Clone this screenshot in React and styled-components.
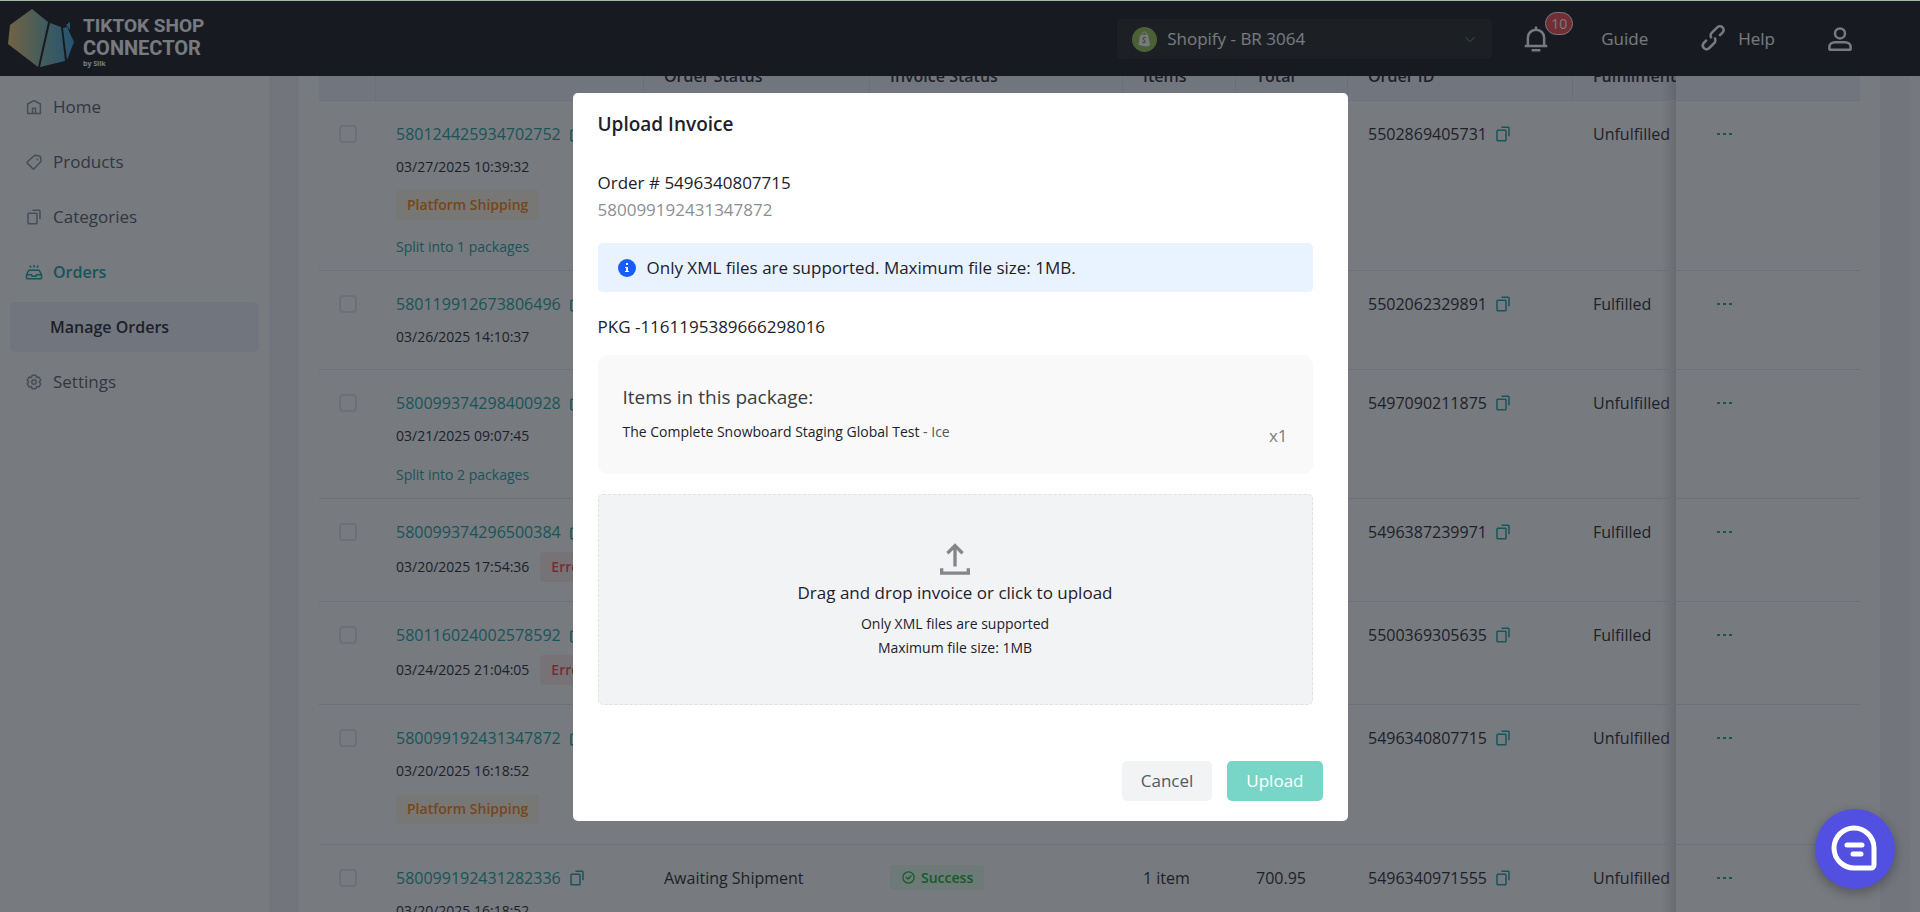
import React from "react";
import styled, { createGlobalStyle } from "styled-components";

const GlobalStyle = createGlobalStyle`
  :root {
    --root-font: "Open Sans", "Noto Sans", sans-serif;
    --text: #1d2129;
    --text-2: #4e5969;
    --teal: #0fa29e;
    --line: #e5e6eb;
  }
  * {
    box-sizing: border-box;
  }
  body {
    margin: 0;
    font: normal 400 17px/26px var(--root-font);
    color: var(--text);
    background: #f2f3f5;
  }
  button, select, input {
    font: inherit;
    color: inherit;
  }
  a {
    color: inherit;
    text-decoration: none;
  }
`;

const Page = styled.div`
  height: 100vh;
  display: flex;
  flex-direction: column;
  overflow: hidden;
`;

const TopLine = styled.div`
  position: fixed;
  top: 0;
  left: 0;
  right: 0;
  height: 1px;
  background: #a3bba3;
  z-index: 20;
`;

const Header = styled.header`
  flex: none;
  height: 76px;
  background: #111214;
  color: #ffffff;
  display: flex;
  align-items: center;
  justify-content: space-between;
  padding: 2px 65px 0 8px;
`;

const Brand = styled.a`
  display: flex;
  align-items: center;
  gap: 8px;
`;

const BrandText = styled.div`
  display: flex;
  flex-direction: column;
  padding-top: 5px;
  font: normal 700 19px/22px Roboto, "Open Sans", sans-serif;
`;

const BrandName = styled.span`
  font-size: 20px;
`;

const BrandBy = styled.span`
  font: normal 700 7px/10px var(--root-font);
`;

const HeaderNav = styled.nav`
  display: flex;
  align-items: center;
`;

const StoreSelect = styled.label`
  display: flex;
  align-items: center;
  gap: 10px;
  width: 375px;
  height: 40px;
  padding: 0 15px;
  border-radius: 5px;
  background: #1d1e20;
  color: #ffffff;
`;

const SelectArrow = styled.span`
  display: flex;
  color: #5c6675;
`;

const StoreInput = styled.select`
  flex: 1;
  appearance: none;
  border: none;
  padding: 0;
  background: transparent;
`;

const BellButton = styled.button`
  position: relative;
  display: flex;
  margin: 0 0 0 29px;
  padding: 0;
  border: none;
  background: transparent;
`;

const BellCount = styled.span`
  position: absolute;
  top: -12px;
  left: 24px;
  height: 23px;
  padding: 0 5px;
  border: 1px solid #ffffff;
  border-radius: 12px;
  background: #f53f46;
  font: normal 400 14px/21px var(--root-font);
`;

const HeaderLink = styled.a`
  display: flex;
  align-items: center;
  gap: 10px;
  margin-left: 50px;
`;

const Body = styled.div`
  flex: 1;
  min-height: 0;
  display: flex;
`;

const Sidebar = styled.aside`
  flex: none;
  width: 269px;
  padding: 6px 10px;
  background: #ffffff;
  display: flex;
  flex-direction: column;
  gap: 5px;
`;

const MenuItem = styled.a`
  display: flex;
  align-items: center;
  gap: 10px;
  height: 50px;
  padding-left: ${(props) => (props.$sub ? 40 : 15)}px;
  border-radius: 5px;
  background: ${(props) => (props.$selected ? "#f1f2fb" : "transparent")};
  color: ${(props) =>
    props.$active ? "var(--teal)" : props.$selected ? "var(--text)" : "var(--text-2)"};
  font-size: ${(props) => (props.$active || props.$selected ? 16 : 17)}px;
  font-weight: ${(props) => (props.$active || props.$selected ? 600 : 400)};

  svg {
    color: ${(props) => (props.$active ? "var(--teal)" : "#86909c")};
  }
`;

const Main = styled.main`
  flex: 1;
  min-width: 0;
  padding: 0 30px;
  overflow: hidden;
`;

const Panel = styled.div`
  height: 100%;
  padding: 0 20px;
  background: #ffffff;
  overflow: hidden;
`;

const ScrollTrack = styled.div`
  flex: none;
  width: 10px;
  background: #fafafa;
`;

const TableScroll = styled.div`
  margin-top: -24px;
  overflow: hidden;
`;

const Table = styled.table`
  width: 110%;
  min-width: 1640px;
  table-layout: fixed;
  border-collapse: separate;
  border-spacing: 0;
  font-size: 16px;
`;

const Th = styled.th`
  padding: 11px 20px;
  background: #f1f2fb;
  border-bottom: 1px solid var(--line);
  border-right: 1px solid #e6e7ef;
  font-weight: 600;
  text-align: left;
  white-space: nowrap;
`;

const Td = styled.td`
  padding: 20px 20px ${(props) => (props.$tight ? 11 : 20)}px;
  border-bottom: 1px solid var(--line);
  background: #ffffff;
  vertical-align: top;
  white-space: nowrap;
`;

// last column stays pinned to the right edge
const pinned = `
  position: sticky;
  right: 0;
  z-index: 1;

  &::before {
    content: "";
    position: absolute;
    top: 0;
    bottom: 0;
    left: -14px;
    width: 14px;
    background: linear-gradient(to right, transparent, rgba(0, 0, 0, 0.14));
  }
`;

const PinnedTh = styled(Th)`
  ${pinned}
  border-right: none;
`;

const PinnedTd = styled(Td)`
  ${pinned}
  padding-left: 40px;
`;

const Checkbox = styled.input`
  appearance: none;
  display: block;
  width: 18px;
  height: 18px;
  margin: 4px 0;
  border: 2px solid var(--line);
  border-radius: 4px;
  background: #ffffff;
`;

const IdLine = styled.div`
  display: flex;
  align-items: center;
  gap: 7px;
`;

const OrderLink = styled.a`
  color: var(--teal);
`;

const CopyButton = styled.button`
  display: flex;
  padding: 0;
  border: none;
  background: transparent;
  color: var(--teal);
`;

const DateLine = styled.div`
  display: flex;
  align-items: center;
  gap: 11px;
  margin-top: 8px;
  font-size: 14px;
  line-height: 24px;
`;

const tones = {
  orange: { color: "#ff7d00", background: "#fff7e8" },
  red: { color: "#f53f3f", background: "#ffece8" },
  green: { color: "#00b42a", background: "#e8ffea" },
};

const Tag = styled.span`
  display: inline-flex;
  align-items: center;
  gap: 5px;
  height: ${(props) => (props.$small ? 25 : 30)}px;
  margin: ${(props) => (props.$inline ? "-1px 0" : "0")};
  padding: 0 11px;
  border-radius: 4px;
  color: ${(props) => tones[props.$tone].color};
  background: ${(props) => tones[props.$tone].background};
  font-size: 14px;
  line-height: 24px;
  font-weight: 600;
`;

const TagRow = styled.div`
  display: flex;
  margin-top: 11px;
`;

const SplitLink = styled.a`
  display: block;
  margin-top: 15px;
  font-size: 14px;
  line-height: 24px;
  color: var(--teal);
`;

const MoreButton = styled.button`
  display: flex;
  height: 26px;
  align-items: center;
  padding: 0;
  border: none;
  background: transparent;
  color: var(--teal);
`;

const Mask = styled.div`
  position: fixed;
  inset: 0;
  display: flex;
  justify-content: center;
  align-items: center;
  padding-top: 2px;
  background: rgba(29, 33, 41, 0.6);
  z-index: 10;
`;

const Modal = styled.section`
  width: 775px;
  border-radius: 5px;
  background: #ffffff;
  padding: 18px 25px 20px;
`;

const ModalTitle = styled.h2`
  margin: 0;
  font: normal 600 19px/26px var(--root-font);
`;

const ModalBody = styled.div`
  display: flex;
  flex-direction: column;
  padding: 32px 10px 56px 0;
`;

const OrderNo = styled.div`
  line-height: 27px;
`;

const OrderRef = styled(OrderNo)`
  color: #8c8f94;
`;

const Notice = styled.div`
  display: flex;
  align-items: center;
  gap: 11px;
  margin: 20px 0 22px;
  padding: 12px 20px 11px;
  border-radius: 5px;
  background: #e8f3ff;
`;

const PackageBox = styled.div`
  margin: 15px 0 20px;
  padding: 27px 25px 23px;
  border-radius: 10px;
  background: #f9f9f9;
`;

const PackageTitle = styled.h3`
  margin: 0 0 8px;
  font: normal 400 19px/30px var(--root-font);
  color: #3d3d3d;
`;

const PackageItem = styled.div`
  display: flex;
  justify-content: space-between;
  font-size: 14px;
  line-height: 24px;
`;

const Variant = styled.span`
  color: #555555;
`;

const Quantity = styled.span`
  padding-top: 1px;
  font-size: 17px;
  line-height: 30px;
  color: #7d7d7d;
`;

const DropZone = styled.label`
  display: flex;
  flex-direction: column;
  align-items: center;
  padding: 44px 20px;
  border: 1px dashed #e0e2e8;
  border-radius: 5px;
  background: #f2f3f5;
  font-size: 14px;
  line-height: 24px;

  svg {
    color: #86868a;
  }
`;

const DropTitle = styled.span`
  padding-bottom: 6px;
  font-size: 17px;
  line-height: 27px;
`;

const FileInput = styled.input`
  position: absolute;
  width: 1px;
  height: 1px;
  opacity: 0;
`;

const Footer = styled.footer`
  display: flex;
  justify-content: flex-end;
  gap: 15px;
`;

const Button = styled.button`
  height: 40px;
  padding: 0 19px;
  border: none;
  border-radius: 5px;
  background: ${(props) => (props.$primary ? "#78d6c9" : "#f2f3f5")};
  color: ${(props) => (props.$primary ? "#ffffff" : "var(--text-2)")};
`;

const ChatButton = styled.button`
  position: fixed;
  right: 25px;
  bottom: 23px;
  width: 80px;
  height: 80px;
  padding: 0;
  border: none;
  border-radius: 50%;
  background: #5150e0;
  box-shadow: 0 4px 12px rgba(0, 0, 0, 0.3);
  z-index: 20;
`;

const paths = {
  home: "M7 16 24 7l17 9v25H7V16Z M20 27h8v14h-8V27Z",
  tag: "M26 6 39 8a2 2 0 0 1 2 2L43 22 24 42a2 2 0 0 1-3 0L6 27a2 2 0 0 1 0-3L26 6Z M33 15v5",
  copy: "M20 6h18a2 2 0 0 1 2 2v22M8 16v24c0 1.1.9 2 2 2h20a2 2 0 0 0 2-2V16a2 2 0 0 0-2-2H10a2 2 0 0 0-2 2Z",
  orders:
    "M4 31v9a2 2 0 0 0 2 2h36a2 2 0 0 0 2-2v-9M4 31l6-11a2 2 0 0 1 2-1h24a2 2 0 0 1 2 1l6 11M4 31h13l2 4h10l2-4h13M24 5v7M13 7l3 5M35 7l-3 5",
  settings:
    "M18.8 6.7a1 1 0 0 1 1-.7h8.4a1 1 0 0 1 1 .7l1.3 4.7a1 1 0 0 0 1.2.7l4.7-1.2a1 1 0 0 1 1.1.4l4.2 7.4a1 1 0 0 1-.1 1.2l-3.4 3.4a1 1 0 0 0 0 1.4l3.4 3.4a1 1 0 0 1 .1 1.2l-4.2 7.4a1 1 0 0 1-1.1.4l-4.7-1.2a1 1 0 0 0-1.2.7l-1.3 4.7a1 1 0 0 1-1 .7h-8.4a1 1 0 0 1-1-.7l-1.3-4.7a1 1 0 0 0-1.2-.7l-4.7 1.2a1 1 0 0 1-1.1-.4l-4.2-7.4a1 1 0 0 1 .1-1.2l3.4-3.4a1 1 0 0 0 0-1.4l-3.4-3.4a1 1 0 0 1-.1-1.2l4.2-7.4a1 1 0 0 1 1.1-.4l4.7 1.2a1 1 0 0 0 1.2-.7l1.3-4.7Z M30 24a6 6 0 1 1-12 0 6 6 0 0 1 12 0Z",
  bell: "M24 9c7.2 0 13 5.8 13 13v13H11V22c0-7.2 5.8-13 13-13Zm0 0V4M6 35h36m-25 7h14",
  link: "m14.1 25.4-5 5a6 6 0 0 0 8.5 8.4l8.5-8.4a6 6 0 0 0 0-8.5m-4.200.7a6 6 0 0 1 0-8.500l8.500-8.400a6 6 0 1 1 8.500 8.400l-5 5",
  user: "M7 37c0-5 4-8 9-8h16c5 0 9 3 9 8v3a1 1 0 0 1-1 1H8a1 1 0 0 1-1-1v-3Z M32 15a8 8 0 1 1-16 0 8 8 0 0 1 16 0Z",
  down: "M39.6 17.4 24 33 8.5 17.4",
  upload: "M14.9 17.1 24 8l9.1 9.1M24 33.1v-25M40 35v6H8v-6",
  check: "m15 22 7 7 11.5-11.5M42 24a18 18 0 1 1-36 0 18 18 0 0 1 36 0Z",
};

function Icon({ name, size = 18 }) {
  return (
    <svg
      width={size}
      height={size}
      viewBox="0 0 48 48"
      fill="none"
      stroke="currentColor"
      strokeWidth="4"
      aria-hidden="true"
    >
      <path d={paths[name]} />
    </svg>
  );
}

function Logo() {
  return (
    <svg width="67" height="60" viewBox="0 0 67 60" aria-hidden="true">
      <defs>
        <linearGradient id="silk" gradientUnits="userSpaceOnUse" x1="0" y1="0" x2="67" y2="0">
          <stop offset="0" stopColor="#f5c46c" />
          <stop offset="0.5" stopColor="#83b5a4" />
          <stop offset="1" stopColor="#2f9fe0" />
        </linearGradient>
      </defs>
      <g fill="url(#silk)">
        <path d="M24 0 40 13 30 58 0 35 2 16Z" />
        <path d="M42 14 53 18 57 52 32 58Z" />
        <path d="M55 19 59 18 66 33 59 51Z" />
        <path d="M58 16 62 13V21Z" />
      </g>
    </svg>
  );
}

function ShopifyIcon() {
  return (
    <svg width="25" height="25" viewBox="0 0 25 25" aria-hidden="true">
      <circle cx="12.5" cy="12.5" r="12.5" fill="#95bf47" />
      <path d="M8 8.5 16 7.5 18 18.5 14.5 19.5 6.5 18Z" fill="#ffffff" />
      <path d="M10 9c0-3 1.5-4 2.8-4S15 6.5 15 8.5" fill="none" stroke="#ffffff" />
      <path
        d="M14 10.8c-1.5-.8-3-.2-2.9 1 .1 1.3 2 1.3 2 2.7 0 1.2-1.6 1.5-2.6.5"
        fill="none"
        stroke="#75a038"
        strokeWidth="1.3"
      />
    </svg>
  );
}

const menu = [
  { label: "Home", icon: "home" },
  { label: "Products", icon: "tag" },
  { label: "Categories", icon: "copy" },
  { label: "Orders", icon: "orders", active: true },
  { label: "Manage Orders", sub: true, selected: true },
  { label: "Settings", icon: "settings" },
];

const columns = [57, 268, 226, 253, 113, 112, 225];

const headings = ["", "", "Order Status", "Invoice Status", "Items", "Total", "Order ID"];

const orders = [
  {
    id: "580124425934702752",
    date: "03/27/2025 10:39:32",
    platform: true,
    split: "Split into 1 packages",
    orderId: "5502869405731",
    fulfillment: "Unfulfilled",
  },
  {
    id: "580119912673806496",
    date: "03/26/2025 14:10:37",
    orderId: "5502062329891",
    fulfillment: "Fulfilled",
  },
  {
    id: "580099374298400928",
    date: "03/21/2025 09:07:45",
    split: "Split into 2 packages",
    orderId: "5497090211875",
    fulfillment: "Unfulfilled",
  },
  {
    id: "580099374296500384",
    date: "03/20/2025 17:54:36",
    error: true,
    orderId: "5496387239971",
    fulfillment: "Fulfilled",
  },
  {
    id: "580116024002578592",
    date: "03/24/2025 21:04:05",
    error: true,
    orderId: "5500369305635",
    fulfillment: "Fulfilled",
  },
  {
    id: "580099192431347872",
    date: "03/20/2025 16:18:52",
    platform: true,
    orderId: "5496340807715",
    fulfillment: "Unfulfilled",
  },
  {
    id: "580099192431282336",
    date: "03/20/2025 16:18:52",
    status: "Awaiting Shipment",
    invoice: "Success",
    items: "1 item",
    total: "700.95",
    orderId: "5496340971555",
    fulfillment: "Unfulfilled",
  },
];

function OrderRow({ order }) {
  const tight = Boolean(order.split);
  return (
    <tr>
      <Td>
        <Checkbox type="checkbox" aria-label={`Select order ${order.id}`} />
      </Td>
      <Td $tight={tight}>
        <IdLine>
          <OrderLink href="#">{order.id}</OrderLink>
          <CopyButton aria-label="Copy id">
            <Icon name="copy" />
          </CopyButton>
        </IdLine>
        <DateLine>
          {order.date}
          {order.error && (
            <Tag $tone="red" $inline>
              Error
            </Tag>
          )}
        </DateLine>
        {order.platform && (
          <TagRow>
            <Tag $tone="orange">Platform Shipping</Tag>
          </TagRow>
        )}
        {order.split && <SplitLink href="#">{order.split}</SplitLink>}
      </Td>
      <Td>{order.status}</Td>
      <Td>
        {order.invoice && (
          <Tag $tone="green" $small>
            <Icon name="check" size={15} />
            {order.invoice}
          </Tag>
        )}
      </Td>
      <Td>{order.items}</Td>
      <Td>{order.total}</Td>
      <Td>
        <IdLine>
          {order.orderId}
          <CopyButton aria-label="Copy order id">
            <Icon name="copy" />
          </CopyButton>
        </IdLine>
      </Td>
      <Td>{order.fulfillment}</Td>
      <PinnedTd>
        <MoreButton aria-label="More actions">
          <svg width="16" height="4" viewBox="0 0 16 4" fill="currentColor" aria-hidden="true">
            <path d="M1 1h3v2H1ZM7 1h3v2H7ZM13 1h3v2h-3Z" />
          </svg>
        </MoreButton>
      </PinnedTd>
    </tr>
  );
}

function UploadInvoice() {
  return (
    <Mask>
      <Modal role="dialog" aria-labelledby="upload-title">
        <ModalTitle id="upload-title">Upload Invoice</ModalTitle>
        <ModalBody>
          <OrderNo>Order # 5496340807715</OrderNo>
          <OrderRef>580099192431347872</OrderRef>
          <Notice>
            <svg width="18" height="18" viewBox="0 0 18 18" aria-hidden="true">
              <circle cx="9" cy="9" r="9" fill="#165dff" />
              <path d="M8 4h2v2H8ZM7 8h3v4h1v1H7v-1h1V9H7Z" fill="#ffffff" />
            </svg>
            Only XML files are supported. Maximum file size: 1MB.
          </Notice>
          <div>PKG -1161195389666298016</div>
          <PackageBox>
            <PackageTitle>Items in this package:</PackageTitle>
            <PackageItem>
              <span>
                The Complete Snowboard Staging Global Test <Variant>- Ice</Variant>
              </span>
              <Quantity>x1</Quantity>
            </PackageItem>
          </PackageBox>
          <DropZone>
            <FileInput type="file" accept=".xml" />
            <Icon name="upload" size={40} />
            <DropTitle>Drag and drop invoice or click to upload</DropTitle>
            <span>Only XML files are supported</span>
            <span>Maximum file size: 1MB</span>
          </DropZone>
        </ModalBody>
        <Footer>
          <Button>Cancel</Button>
          <Button $primary>Upload</Button>
        </Footer>
      </Modal>
    </Mask>
  );
}

function App() {
  return (
    <Page>
      <GlobalStyle />
      <TopLine />
      <Header>
        <Brand href="#">
          <Logo />
          <BrandText>
            <span>TIKTOK SHOP</span>
            <BrandName>CONNECTOR</BrandName>
            <BrandBy>by Silk</BrandBy>
          </BrandText>
        </Brand>
        <HeaderNav>
          <StoreSelect>
            <ShopifyIcon />
            <StoreInput aria-label="Store">
              <option>Shopify - BR 3064</option>
            </StoreInput>
            <SelectArrow>
              <Icon name="down" size={14} />
            </SelectArrow>
          </StoreSelect>
          <BellButton aria-label="Notifications">
            <Icon name="bell" size={30} />
            <BellCount>10</BellCount>
          </BellButton>
          <HeaderLink href="#">Guide</HeaderLink>
          <HeaderLink href="#">
            <Icon name="link" size={30} />
            Help
          </HeaderLink>
          <HeaderLink href="#" aria-label="Account">
            <Icon name="user" size={30} />
          </HeaderLink>
        </HeaderNav>
      </Header>
      <Body>
        <Sidebar>
          {menu.map((item) => (
            <MenuItem
              key={item.label}
              href="#"
              $active={item.active}
              $selected={item.selected}
              $sub={item.sub}
            >
              {item.icon && <Icon name={item.icon} />}
              {item.label}
            </MenuItem>
          ))}
        </Sidebar>
        <Main>
          <Panel>
            <TableScroll>
              <Table>
                <colgroup>
                  {columns.map((width, index) => (
                    <col key={index} width={width} />
                  ))}
                  <col />
                  <col width={184} />
                </colgroup>
                <thead>
                  <tr>
                    {headings.map((text, index) => (
                      <Th key={index}>{text}</Th>
                    ))}
                    <Th>Fulfillment Status</Th>
                    <PinnedTh />
                  </tr>
                </thead>
                <tbody>
                  {orders.map((order) => (
                    <OrderRow key={order.id} order={order} />
                  ))}
                </tbody>
              </Table>
            </TableScroll>
          </Panel>
        </Main>
        <ScrollTrack />
      </Body>
      <UploadInvoice />
      <ChatButton aria-label="Open chat">
        <svg width="80" height="80" viewBox="0 0 80 80" fill="none" stroke="#ffffff" aria-hidden="true">
          <path
            d="M39 19a20 20 0 0 1 20 20v17a3 3 0 0 1-3 3H39a20 20 0 0 1 0-40Z"
            strokeWidth="5"
          />
          <path d="M32 36h15M38 45h8" strokeWidth="5" strokeLinecap="round" />
        </svg>
      </ChatButton>
    </Page>
  );
}

export default App;
